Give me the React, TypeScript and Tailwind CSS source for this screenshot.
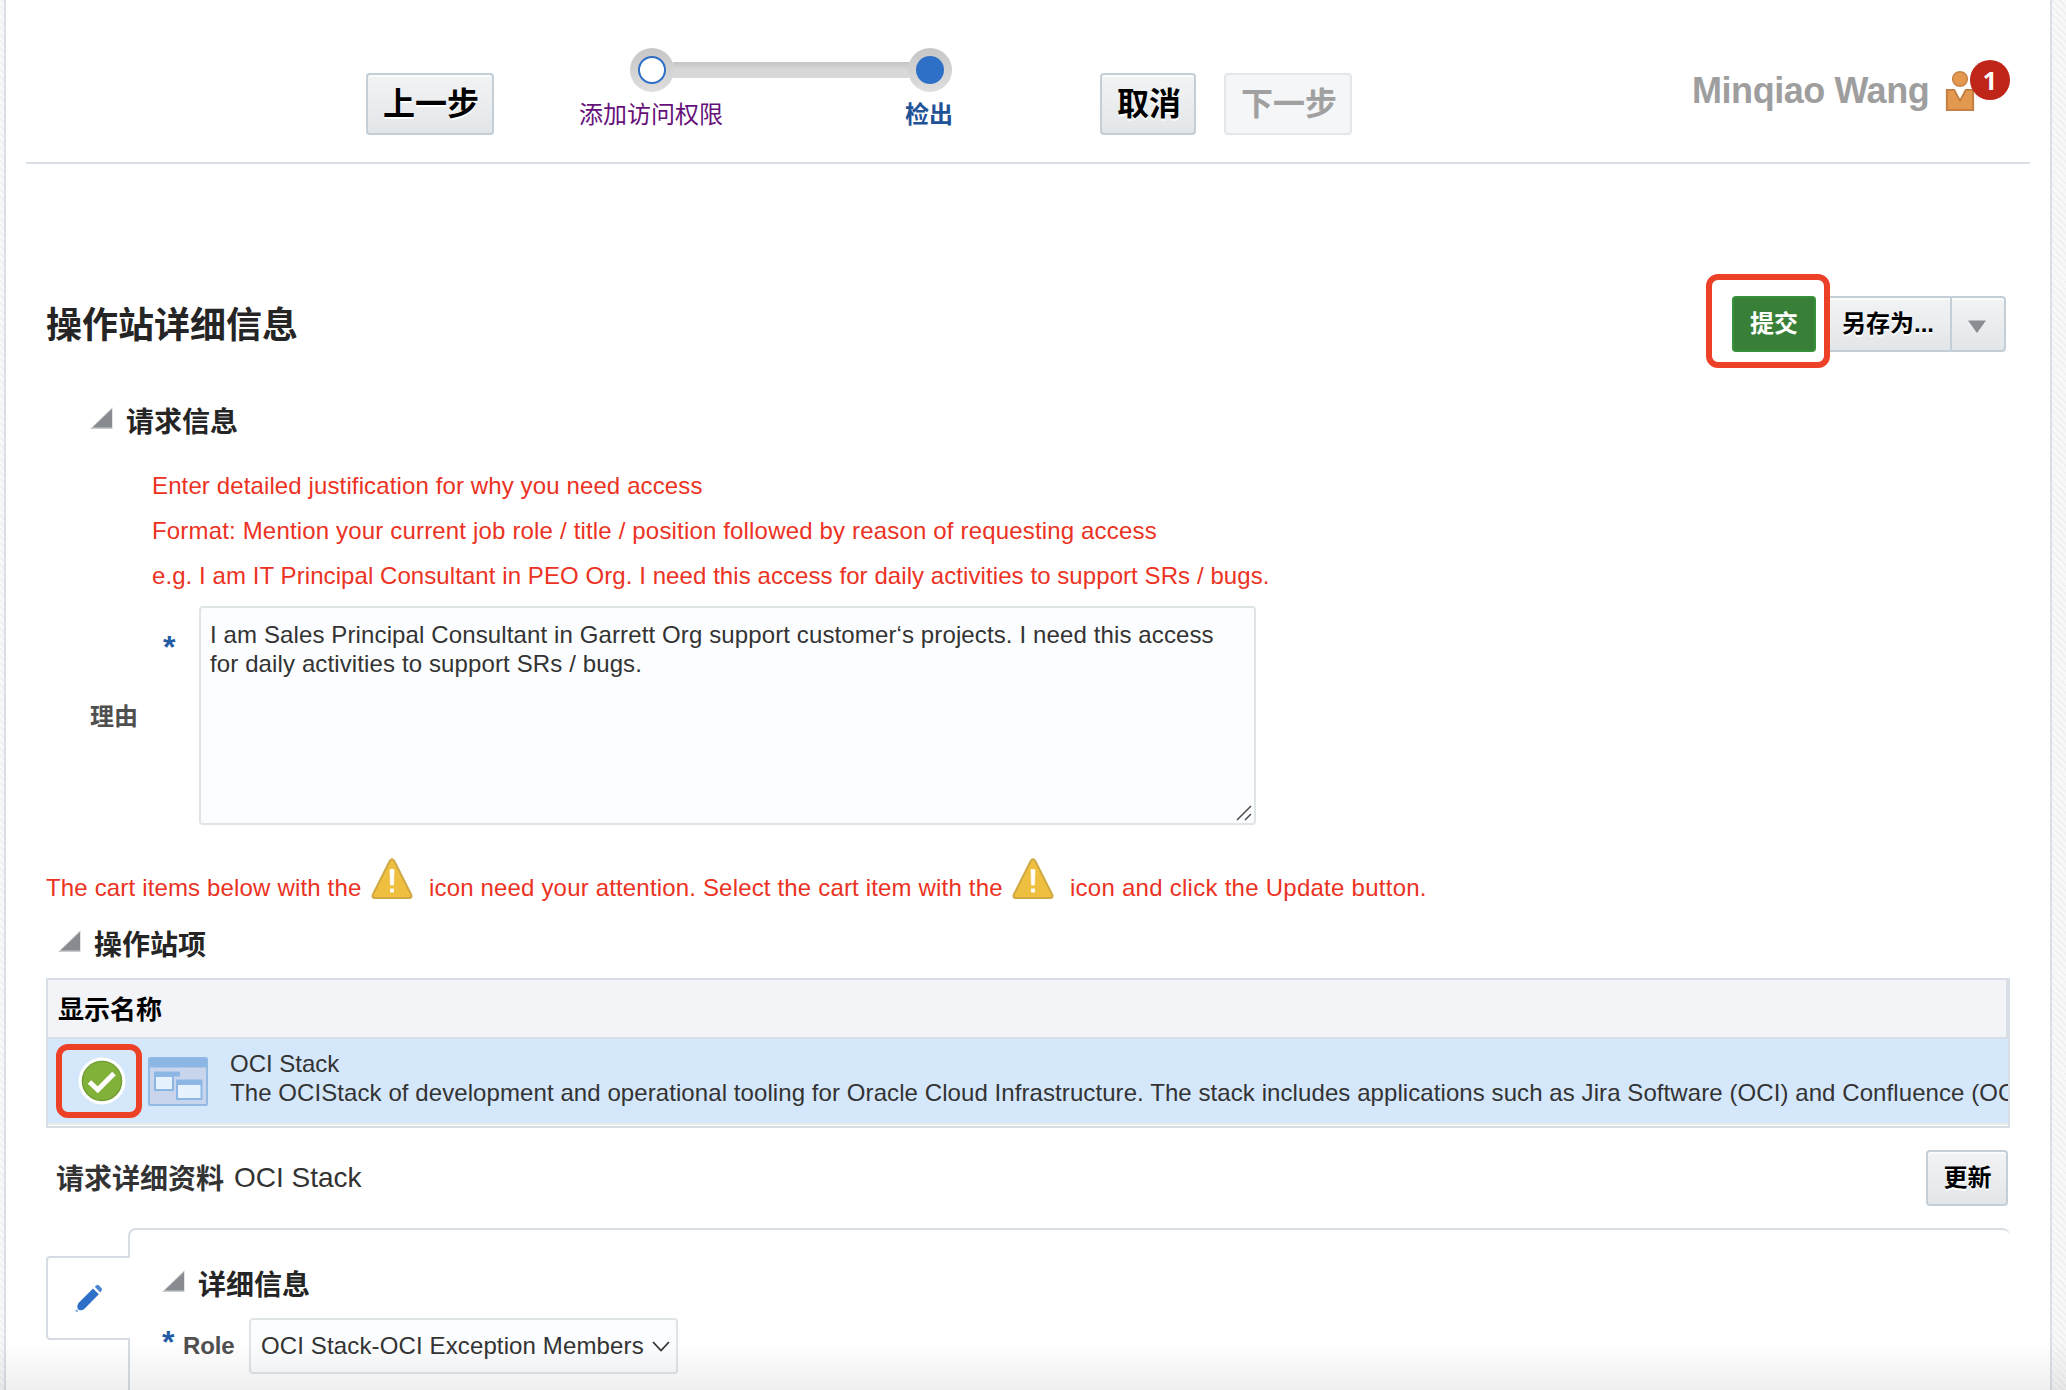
import type { ReactNode } from "react";

function Button({ className, children }: { className: string; children: ReactNode }) {
  return (
    <button
      className={`flex shrink-0 items-center justify-center border-2 border-[#c4ced7] bg-linear-to-b from-[#f2f3f5] to-[#e3e6e8] font-bold text-black shadow-[inset_0_2px_0_#fafbfb] [text-shadow:0_2px_0_#fff] ${className}`}
    >
      {children}
    </button>
  );
}

function Disclosure() {
  return (
    <svg width="23" height="22" viewBox="0 0 23 22" className="shrink-0">
      <path d="M22.5 0V22H0Z" fill="#c9cccf" />
      <path d="M22 2V20.5H2.5Z" fill="#878b90" />
    </svg>
  );
}

function SectionTitle({ title, className }: { title: string; className: string }) {
  return (
    <div className={`flex h-10 items-center gap-[13px] ${className}`}>
      <div className="-mt-[6px]">
        <Disclosure />
      </div>
      <h2 className="pt-[3px] text-[28px] leading-10 font-bold text-[#252525]">{title}</h2>
    </div>
  );
}

function Warning() {
  return (
    <svg width="42" height="42" viewBox="0 0 42 42" className="-mt-[10px] shrink-0">
      <path
        d="M18.6 3.2Q21 -0.6 23.4 3.2L40.2 36.6Q41.4 40 38 40H4Q0.6 40 1.8 36.6Z"
        fill="#efbf40"
        stroke="#cfa843"
        strokeWidth="2"
      />
      <path d="M19 11.5H23L22.6 27H19.4Z" fill="#fff" stroke="#fff" strokeWidth="0.6" />
      <rect x="19" y="30.5" width="4" height="4" rx="0.8" fill="#fff" />
    </svg>
  );
}

function Person() {
  return (
    <svg width="30" height="42" viewBox="0 0 30 42" className="shrink-0">
      <circle cx="15" cy="9" r="7.3" fill="#e39850" stroke="#c98445" strokeWidth="1.6" />
      <path d="M1.8 19.8H9.2L15 30.6L20.8 19.8H28.2V40.2H1.8Z" fill="#e39850" stroke="#c27c3d" strokeWidth="1.8" />
    </svg>
  );
}

function CheckMark() {
  return (
    <svg width="48" height="48" viewBox="0 0 48 48" className="shrink-0">
      <circle cx="24" cy="24" r="23.5" fill="#fff" />
      <circle cx="24" cy="24" r="19.6" fill="#82b13a" stroke="#6f9d31" strokeWidth="1.4" />
      <path d="M11.5 25L19.8 32.8L36 16.5" fill="none" stroke="#fff" strokeWidth="5" />
    </svg>
  );
}

function AppWindow() {
  return (
    <svg width="60" height="49" viewBox="0 0 60 49" className="shrink-0">
      <rect x="1" y="1" width="58" height="47" rx="1.5" fill="#c8d5ec" stroke="#92bae3" strokeWidth="2" />
      <rect x="1" y="1" width="58" height="9.5" fill="#8cb7e4" />
      <path d="M6 14.5H32V19.5H26V34H6Z" fill="#8cb7e4" />
      <rect x="8" y="20" width="16" height="12" fill="#e6f2fe" />
      <rect x="28" y="22.5" width="26.5" height="20.5" fill="#8cb7e4" />
      <rect x="30" y="28" width="22.5" height="13" fill="#e6f2fe" />
    </svg>
  );
}

function Pencil() {
  return (
    <svg width="28" height="30" viewBox="0 0 28 30" className="shrink-0">
      <path d="M18 5.5L23.8 11.3L9 26.2Q6.5 28 4 27L2.6 25.5Q1.8 22.5 3.5 20Z" fill="#2e70c9" />
      <path d="M19.8 3.8L21.5 2.2Q22.8 1.4 24 2.5L26.6 5.3Q27.4 6.6 26.5 7.7L25.2 9.4Z" fill="#4a83cf" />
      <circle cx="1.8" cy="27.8" r="1.4" fill="#8fb5e3" />
    </svg>
  );
}

function Stepper() {
  return (
    <div className="mt-12 ml-[86px] w-[372px] shrink-0">
      <div className="flex h-11 items-center pl-[50px]">
        <div className="flex size-11 shrink-0 items-center justify-center rounded-full bg-linear-to-b from-[#c6c6c7] to-[#dedede]">
          <div className="size-7 rounded-full border-2 border-[#2e6fc8] bg-white" />
        </div>
        <div className="-mx-px h-4 grow bg-linear-to-b from-[#c4c4c4] via-[#d8d8d8] via-50% to-[#d8d8d8]" />
        <div className="flex size-11 shrink-0 items-center justify-center rounded-full bg-linear-to-b from-[#c6c6c7] to-[#dedede]">
          <div className="size-7 rounded-full bg-[#2e6fc8]" />
        </div>
      </div>
      <div className="-mr-px mt-[7px] flex justify-between text-2xl leading-8">
        <span className="-ml-px text-[#66117a]">添加访问权限</span>
        <span className="font-bold text-[#235397]">检出</span>
      </div>
    </div>
  );
}

function Header() {
  return (
    <header className="mx-5 flex h-[164px] shrink-0 items-start border-b-2 border-[#d9dfe6]">
      <Button className="mt-[73px] ml-[340px] h-[62px] w-32 rounded-[4px] pl-[2px] text-[32px]">上一步</Button>
      <Stepper />
      <Button className="mt-[73px] ml-[148px] h-[62px] w-24 rounded-[4px] pl-[2px] text-[32px]">取消</Button>
      <button className="mt-[73px] ml-7 flex h-[62px] w-32 shrink-0 items-center justify-center rounded-[4px] border-2 border-[#e2e7eb] bg-[#f4f6f8] pl-[2px] text-[32px] font-bold text-[#a0a0a0]">
        下一步
      </button>
      <span className="mt-[70px] ml-[340px] w-[253px] shrink-0 text-[36px] leading-[42px] font-bold tracking-[-0.45px] whitespace-nowrap text-[#9e9e9e]">
        Minqiao Wang
      </span>
      <div className="relative mt-[70px]">
        <Person />
        <span className="absolute -top-[10px] left-[25px] flex size-10 items-center justify-center rounded-full bg-[#c02519] font-['Noto_Sans'] text-[25px] leading-none font-bold text-white">
          1
        </span>
      </div>
    </header>
  );
}

function TitleBar() {
  return (
    <div className="mt-[132px] mr-11 ml-10 flex h-14 shrink-0 items-center">
      <h1 className="grow pt-[3px] text-[36px] leading-[56px] font-bold text-[#252525]">操作站详细信息</h1>
      <div className="relative z-10 mr-[10px]">
        <button className="flex h-14 w-[84px] items-center justify-center rounded-[4px] border-2 border-[#37903a] bg-[#387f37] text-2xl font-bold text-white">
          提交
        </button>
        <div className="absolute -top-[22px] -left-[26px] h-[94px] w-[124px] rounded-[12px] border-6 border-[#ec4127]" />
      </div>
      <Button className="h-14 w-[126px] rounded-l-[4px] pr-[2px] text-2xl">另存为...</Button>
      <Button className="-ml-[2px] h-14 w-14 rounded-r-[4px]">
        <svg width="18" height="13" viewBox="0 0 18 13" className="-ml-[2px] mt-1">
          <path d="M0 0.5H18L9 13Z" fill="#8a8e92" />
        </svg>
      </Button>
    </div>
  );
}

function Justification() {
  return (
    <>
      <div className="mt-[22px] ml-[146px] shrink-0 text-2xl leading-[45px] whitespace-nowrap text-[#eb3223]">
        <p className="tracking-[0.12px]">Enter detailed justification for why you need access</p>
        <p className="tracking-[0.17px]">
          Format: Mention your current job role / title / position followed by reason of requesting access
        </p>
        <p className="tracking-[0.075px]">
          e.g. I am IT Principal Consultant in PEO Org. I need this access for daily activities to support SRs / bugs.
        </p>
      </div>
      <div className="mt-2 ml-[84px] flex h-[219px] shrink-0">
        <label className="w-[73px] self-center pt-[2px] text-2xl leading-8 font-bold text-[#4f4f4f]">理由</label>
        <span className="mt-[25px] w-[36px] text-[32px] leading-8 font-bold text-[#235ba5]">*</span>
        <div className="relative">
          <textarea
            readOnly
            className="block h-[219px] w-[1057px] resize-none rounded-[4px] border-2 border-[#dfe4e7] bg-[#fcfdfe] pt-3 pr-6 pl-[9px] text-2xl leading-[29px] tracking-[0.12px] text-[#333] outline-none"
            value={
              "I am Sales Principal Consultant in Garrett Org support customer‘s projects. I need this access for daily activities to support SRs / bugs."
            }
          />
          <svg width="16" height="16" viewBox="0 0 16 16" className="absolute right-1 bottom-1">
            <path d="M1 15L15 1M9 15L15 9" stroke="#4a4a4a" strokeWidth="1.5" />
          </svg>
        </div>
      </div>
    </>
  );
}

function CartNotice() {
  return (
    <div className="mt-[42px] ml-10 flex h-10 shrink-0 items-start pt-px text-2xl leading-10 whitespace-nowrap text-[#eb3223]">
      <span className="w-[325px] tracking-[0.16px]">The cart items below with the</span>
      <Warning />
      <span className="ml-4 w-[583px] tracking-[0.17px]">
        icon need your attention. Select the cart item with the
      </span>
      <Warning />
      <span className="ml-4 tracking-[0.26px]">icon and click the Update button.</span>
    </div>
  );
}

function CartTable() {
  return (
    <div className="mt-[14px] ml-10 flex h-[150px] w-[1964px] shrink-0 flex-col border-2 border-[#d7dee5]">
      <div className="flex h-[59px] shrink-0 items-center border-r-2 border-b-2 border-[#d7dee5] bg-[#f3f4f8] pt-[3px] pl-[10px] text-[26px] font-bold text-black">
        显示名称
      </div>
      <div className="relative flex h-[84px] shrink-0 bg-[#d5e7fa]">
        <div className="absolute top-[5px] left-2 h-[74px] w-[86px] rounded-[12px] border-6 border-[#ec4127]" />
        <div className="mt-[18px] ml-[30px]">
          <CheckMark />
        </div>
        <div className="mt-[18px] ml-[22px]">
          <AppWindow />
        </div>
        <div className="ml-[22px] grow overflow-hidden pt-[10px] text-2xl leading-[29px] whitespace-nowrap text-[#333]">
          <p>OCI Stack</p>
          <p className="tracking-[0.08px]">
            The OCIStack of development and operational tooling for Oracle Cloud Infrastructure. The stack includes
            applications such as Jira Software (OCI) and Confluence (OC
          </p>
        </div>
      </div>
      <div className="h-[2px] shrink-0 bg-[#ececec]" />
    </div>
  );
}

function RequestDetails() {
  return (
    <>
      <div className="mt-[22px] mr-[42px] ml-[50px] flex h-14 shrink-0 items-center text-[28px] leading-[56px] text-[#333]">
        <span className="pt-[3px] font-bold">请求详细资料</span>
        <span className="ml-[10px] grow">OCI Stack</span>
        <Button className="h-14 w-[82px] rounded-[4px] pl-px text-2xl">更新</Button>
      </div>
      <div className="mt-[22px] mr-10 ml-10 flex shrink-0">
        <div className="relative z-10 mt-7 flex h-[84px] w-[84px] shrink-0 items-center justify-center rounded-l-[4px] border-y-2 border-l-2 border-[#d5dce3] bg-white">
          <Pencil />
        </div>
        <div className="-ml-[2px] h-[172px] grow rounded-t-[8px] border-t-2 border-l-2 border-[#d7dde3] pl-8">
          <SectionTitle title="详细信息" className="mt-[34px]" />
          <div className="mt-[14px] flex h-14 items-center">
            <span className="w-[21px] self-start pt-[8px] text-[32px] leading-8 font-bold text-[#235ba5]">*</span>
            <label className="w-[66px] text-2xl font-bold tracking-[-0.1px] text-[#4f4f4f]">Role</label>
            <div className="flex h-14 w-[429px] items-center rounded-[4px] border-2 border-[#dfe4e7] bg-[#fcfdfe] pl-[10px] text-2xl tracking-[0.13px] whitespace-nowrap text-[#333]">
              <span className="w-[391px]">OCI Stack-OCI Exception Members</span>
              <svg width="18" height="11" viewBox="0 0 18 11" className="shrink-0">
                <path d="M1 1L9 9.5L17 1" fill="none" stroke="#333" strokeWidth="1.8" />
              </svg>
            </div>
          </div>
        </div>
      </div>
    </>
  );
}

export default function App() {
  return (
    <div className="relative flex h-[1390px] w-[2066px] overflow-hidden bg-[repeating-linear-gradient(45deg,#f8f8f8_0px,#f8f8f8_3px,#f1f1f1_3px,#f1f1f1_5px)] pr-[14px] pl-1 font-['Liberation_Sans','Noto_Sans_CJK_SC',sans-serif]">
      <main className="flex h-full w-[2048px] flex-col overflow-hidden border-x-2 border-[#d9dfe6] bg-white">
        <Header />
        <TitleBar />
        <SectionTitle title="请求信息" className="mt-[49px] ml-[84px] shrink-0" />
        <Justification />
        <CartNotice />
        <SectionTitle title="操作站项" className="mt-[17px] ml-[52px] shrink-0" />
        <CartTable />
        <RequestDetails />
      </main>
      <div className="pointer-events-none absolute inset-x-0 bottom-0 h-[50px] bg-linear-to-b from-black/0 to-black/[0.065]" />
    </div>
  );
}
